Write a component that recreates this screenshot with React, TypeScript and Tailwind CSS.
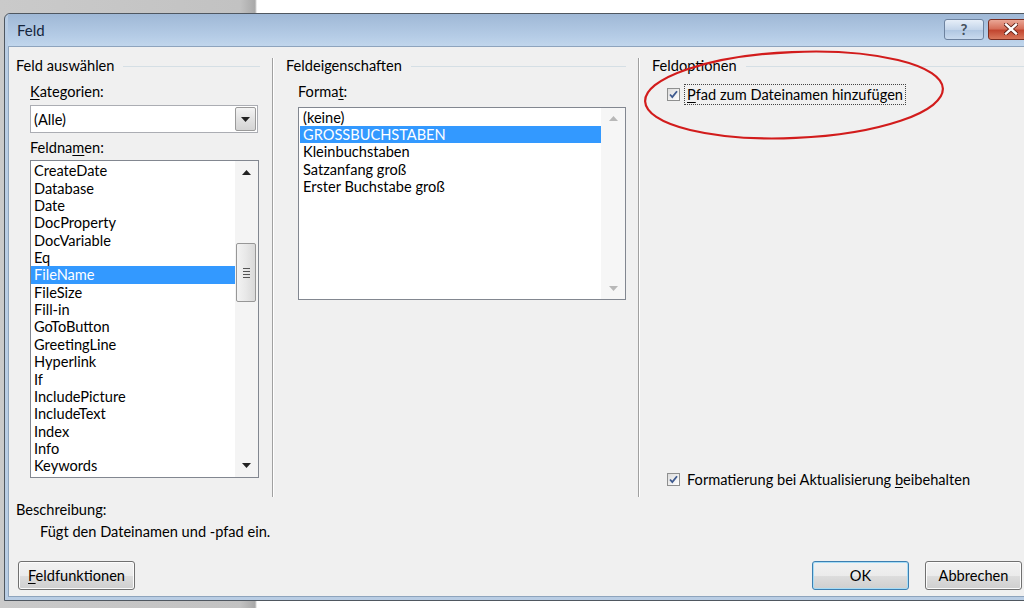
import React from "react";

const fieldNames = [
  "CreateDate", "Database", "Date", "DocProperty", "DocVariable", "Eq", "FileName", "FileSize", "Fill-in",
  "GoToButton", "GreetingLine", "Hyperlink", "If", "IncludePicture", "IncludeText", "Index", "Info", "Keywords",
];

const formats = ["(keine)", "GROSSBUCHSTABEN", "Kleinbuchstaben", "Satzanfang groß", "Erster Buchstabe groß"];

function Arrow({ up, dim }: { up?: boolean; dim?: boolean }) {
  return (
    <svg width="9" height="5" viewBox="0 0 9 5">
      <path d={up ? "M0 5 L4.5 0 L9 5 Z" : "M0 0 L9 0 L4.5 5 Z"} fill={dim ? "#b8b8b8" : "#222"} />
    </svg>
  );
}

function CheckBox() {
  return (
    <div className="flex h-[13px] w-[13px] items-center justify-center border border-[#8e8f8f] bg-[linear-gradient(135deg,#dcdcdc,#ffffff)]">
      <svg width="11" height="11" viewBox="0 0 11 11">
        <path d="M2 5.5 L4.3 8 L9 2.2" fill="none" stroke="#3e5a8f" strokeWidth="1.8" />
      </svg>
    </div>
  );
}

function GroupHeader({ title, pr }: { title: string; pr: string }) {
  return (
    <div className={`flex h-[16px] items-center ${pr}`}>
      <span className="leading-[16px]">{title}</span>
      <div className="ml-[9px] h-px flex-1 bg-[#d5dfe5]" />
    </div>
  );
}

function WinButton({ children, focused, width }: { children: React.ReactNode; focused?: boolean; width: string }) {
  return (
    <div
      className={`flex h-[29px] ${width} items-center justify-center rounded-[3px] border ${
        focused
          ? "border-[#3c7fb1] shadow-[inset_0_0_0_1px_#a6dcf6]"
          : "border-[#707070] shadow-[inset_0_0_0_1px_#fcfcfc]"
      } bg-[linear-gradient(to_bottom,#f2f2f2_0%,#ebebeb_50%,#dddddd_51%,#cfcfcf_100%)] leading-[17px]`}
    >
      {children}
    </div>
  );
}

export default function App() {
  return (
    <div className="relative flex h-[608px] w-[1024px] flex-col overflow-hidden bg-[linear-gradient(to_right,#cacaca_0px,#c2c2c2_240px,#a9a9a9_255px,#ffffff_257px)] font-['Segoe_UI',Lato,sans-serif] text-[14.6px] text-black">
      <div className="h-[13px] shrink-0" />

      <div className="ml-[4px] flex w-[1040px] flex-1 flex-col rounded-t-[6px] border border-[#4f5760] bg-[#b9cde4] px-[3px] pb-[3px]">
        {/* title bar */}
        <div className="flex h-[32px] shrink-0 items-center bg-[linear-gradient(to_bottom,#9fb8d6,#b5cce6_70%,#c1d6ec)] pl-[9px]">
          <span className="text-[15px] text-[#15253d]">Feld</span>
          <div className="ml-auto mr-[6px] flex items-center gap-[4px] pb-[2px]">
            <div className="flex h-[21px] w-[40px] items-center justify-center rounded-[3px] border border-[#6d829f] bg-[linear-gradient(to_bottom,#e6eef8,#c4d5ea_50%,#aec5e0_51%,#c9daee)] text-[15px] font-bold leading-none text-[#46505c]">
              ?
            </div>
            <div className="flex h-[21px] w-[46px] items-center justify-center rounded-[3px] border border-[#7a2c1f] bg-[linear-gradient(to_bottom,#eaa796,#d6705b_45%,#c24630_55%,#d9785c)]">
              <svg width="14" height="12" viewBox="0 0 14 12">
                <path d="M2 1.5 L12 10.5 M12 1.5 L2 10.5" stroke="#5a1a10" strokeWidth="4" strokeLinecap="square" />
                <path d="M2 1.5 L12 10.5 M12 1.5 L2 10.5" stroke="#ffffff" strokeWidth="2.4" strokeLinecap="square" />
              </svg>
            </div>
          </div>
        </div>

        {/* content */}
        <div className="flex flex-1 flex-col border border-[#8ea4bd] bg-[#f0f0f0] pl-[7px] pr-[8px]">
          <div className="mt-[11px] flex h-[439px] shrink-0">
            {/* Feld auswählen */}
            <div className="flex w-[256px] flex-col">
              <GroupHeader title="Feld auswählen" pr="pr-[12px]" />
              <div className="ml-[14px] mt-[9px] leading-[17px]">
                <u className="underline-offset-2">K</u>ategorien:
              </div>
              <div className="ml-[14px] mt-[5px] flex h-[28px] w-[228px] items-center border border-[#abadb3] bg-white pl-[3px] pr-[1px]">
                <span className="flex-1 leading-[17px]">(Alle)</span>
                <div className="flex h-[24px] w-[21px] items-center justify-center rounded-[2px] border border-[#9a9a9a] bg-[linear-gradient(to_bottom,#f4f4f4,#e2e2e2_50%,#d4d4d4)]">
                  <Arrow />
                </div>
              </div>
              <div className="ml-[14px] mt-[6px] leading-[17px]">
                Feldna<u className="underline-offset-2">m</u>en:
              </div>
              <div className="ml-[14px] mt-[4px] flex h-[318px] w-[229px] border border-[#828790] bg-white">
                <div className="flex-1 pt-[1.4px]">
                  {fieldNames.map((name) => (
                    <div
                      key={name}
                      className={`h-[17.35px] pl-[3px] leading-[17.35px] ${
                        name === "FileName" ? "bg-[#3399ff] text-white" : ""
                      }`}
                    >
                      {name}
                    </div>
                  ))}
                </div>
                <div className="flex w-[23px] flex-col bg-[#f4f4f4]">
                  <div className="flex h-[23px] items-center justify-center">
                    <Arrow up />
                  </div>
                  <div className="flex-1 pl-[1px] pr-[2px] pt-[59px]">
                    <div className="flex h-[59px] flex-col items-center justify-center gap-[2px] rounded-[2px] border border-[#979797] bg-[linear-gradient(to_right,#f3f3f3,#e8e8e8_50%,#d9d9d9)]">
                      <div className="h-px w-[7px] bg-[#555]" />
                      <div className="h-px w-[7px] bg-[#555]" />
                      <div className="h-px w-[7px] bg-[#555]" />
                      <div className="h-px w-[7px] bg-[#555]" />
                    </div>
                  </div>
                  <div className="flex h-[23px] items-center justify-center">
                    <Arrow />
                  </div>
                </div>
              </div>
            </div>

            <div className="w-[2px] border-l border-r border-l-[#a0a0a0] border-r-white" />

            {/* Feldeigenschaften */}
            <div className="flex w-[364px] flex-col pl-[12px]">
              <GroupHeader title="Feldeigenschaften" pr="pr-[12px]" />
              <div className="ml-[12px] mt-[9px] leading-[17px]">
                Forma<u className="underline-offset-2">t</u>:
              </div>
              <div className="ml-[12px] mt-[7px] flex h-[193px] w-[328px] border border-[#828790] bg-white">
                <div className="flex-1 pl-[1px] pt-[0.6px]">
                  {formats.map((f) => (
                    <div
                      key={f}
                      className={`h-[17.4px] pl-[3px] leading-[17.4px] ${
                        f === "GROSSBUCHSTABEN" ? "bg-[#3399ff] text-white" : ""
                      }`}
                    >
                      {f}
                    </div>
                  ))}
                </div>
                <div className="flex w-[24px] flex-col bg-[#f6f6f6]">
                  <div className="flex h-[21px] items-center justify-center">
                    <Arrow up dim />
                  </div>
                  <div className="flex-1" />
                  <div className="flex h-[21px] items-center justify-center">
                    <Arrow dim />
                  </div>
                </div>
              </div>
            </div>

            <div className="w-[2px] border-l border-r border-l-[#a0a0a0] border-r-white" />

            {/* Feldoptionen */}
            <div className="flex flex-1 flex-col pl-[12px]">
              <GroupHeader title="Feldoptionen" pr="pr-0" />
              <div className="ml-[15px] mt-[10px] flex h-[21px] items-center">
                <CheckBox />
                <div className="ml-[4px] flex h-[21px] items-center border border-dotted border-[#444] px-[2px] leading-[17px]">
                  <u className="underline-offset-2">P</u>fad zum Dateinamen hinzufügen
                </div>
              </div>
              <div className="mb-[9px] ml-[15px] mt-auto flex h-[17px] items-center">
                <CheckBox />
                <span className="ml-[7px] leading-[17px]">
                  Formatierung bei Aktualisierung <u className="underline-offset-2">b</u>eibehalten
                </span>
              </div>
            </div>
          </div>

          <div className="mt-[4px] leading-[17px]">Beschreibung:</div>
          <div className="ml-[24px] mt-[5px] leading-[17px]">Fügt den Dateinamen und -pfad ein.</div>

          <div className="mb-[6px] mt-auto flex items-center">
            <div className="ml-[2px]">
              <WinButton width="w-[117px]">
                <span>
                  <u className="underline-offset-2">F</u>eldfunktionen
                </span>
              </WinButton>
            </div>
            <div className="ml-auto flex gap-[16px] pr-[9px]">
              <WinButton width="w-[97px]" focused>
                OK
              </WinButton>
              <WinButton width="w-[97px]">Abbrechen</WinButton>
            </div>
          </div>
        </div>
      </div>

      <div className="h-[7px] shrink-0" />

      {/* red annotation around the first option */}
      <svg className="pointer-events-none absolute left-[640px] top-[44px]" width="320" height="110" viewBox="0 0 320 110">
        <ellipse cx="154" cy="51" rx="149" ry="43" fill="none" stroke="#d21c1c" strokeWidth="2.2" transform="rotate(-2.5 154 51)" />
      </svg>
    </div>
  );
}
